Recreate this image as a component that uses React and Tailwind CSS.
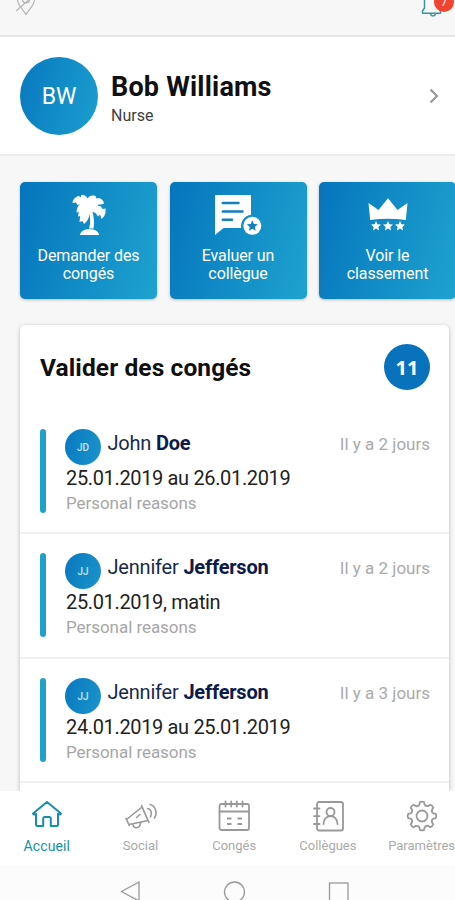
import React from "react";

const STAR = "M0-5 1.5-1.7 5-1.4 2.3 1 3.1 4.5 0 2.6-3.1 4.5-2.3 1-5-1.4-1.5-1.7Z";

function PinIcon() {
  return (
    <svg width="20" height="24" viewBox="0 0 20 24" fill="none" stroke="#b4b4b4" strokeWidth="1.2">
      <path d="M10 22.5C7 17.500 1.500 13 1.500 7.500a8.500 8.500 0 0 1 17 0C18.500 13 13 17.500 10 22.500Z" />
      <circle cx="10" cy="7.500" r="3.500" />
      <path d="M0 19 18 3" />
    </svg>
  );
}

function BellIcon() {
  return (
    <svg width="22" height="24" viewBox="0 0 22 24" fill="none" stroke="#3a92a5" strokeWidth="1.5" strokeLinejoin="round">
      <path d="M3.500 15V8a7 7 0 0 1 14 0v7l2 3v2.200H1.500V18Z" />
      <path d="M9.500 21c.5 2.500 4.500 2.500 5 0" />
    </svg>
  );
}

function PalmIcon() {
  return (
    <svg width="34" height="42" viewBox="0 0 34 42" fill="#fff">
      <path d="M15.500 4.500C14.500 2 12.500.8 9.500.8L8.500 3.500 7 2C3.500 2.500 1 5 .5 9L4 8.500 5.500 11 8.500 10C6 11.500 5 13.500 4.500 18.500L6.800 18 6 22.500 8.200 22 7.500 28 10.500 27 12 30C15.500 27 17.500 23.500 17.500 19.500 18.500 24.500 18.500 30 17 34.500H21.500C22.500 29 22 23.500 20.500 17.500L24 19.500 26 22.500 28 20.500 29.500 25C33 22.500 34 18.500 33.500 14.500L30.500 15 29 12.500 25.500 11.500 26.500 10.500 29 10.500 32 9.500C31.500 5.500 28 3.500 24.500 4.500L23.500 2C20 1 17 2 15.500 4.500Z" />
      <path d="M8 41c.5-4 4-5.800 9.500-5.800s9 1.800 9.500 5.800Z" />
    </svg>
  );
}

function ReviewIcon() {
  return (
    <svg width="48" height="42" viewBox="0 0 48 42">
      <path fill="#fff" d="M1 1H37V20.800a11.500 11.500 0 0 0-9.800 13.200H9.500L1 41Z" />
      <path stroke="#1480c0" strokeWidth="2.500" strokeLinecap="round" d="M8.800 9H24.500M8.800 17.500H28.500M8.800 25.800H18" />
      <circle cx="38.300" cy="31.800" r="9" fill="#fff" />
      <path transform="translate(38.300 31.800) scale(1.100)" d={STAR} fill="#1480c0" />
    </svg>
  );
}

function CrownIcon() {
  return (
    <svg width="40" height="34" viewBox="0 0 40 34" fill="#fff">
      <path d="M.5 5 10.500 12 20 .3 29.500 12 39.500 5 37.800 22Q20 19.500 2.200 22Z" />
      <path transform="translate(8 28)" d={STAR} />
      <path transform="translate(20 28)" d={STAR} />
      <path transform="translate(32 28)" d={STAR} />
    </svg>
  );
}

const line = {
  width: 34,
  height: 34,
  viewBox: "0 0 34 34",
  fill: "none",
  stroke: "currentColor",
  strokeWidth: 1.8,
  strokeLinejoin: "round",
  strokeLinecap: "round",
};

function HomeIcon() {
  return (
    <svg {...line} strokeWidth="2">
      <path d="M17 3 3 14.500Q4 16.500 6 14.800V25.800Q6 27 7.200 27H13.200V19.500Q13.200 18 14.500 18H19.500Q20.800 18 20.800 19.500V27H26.800Q28 27 28 25.800V14.800Q30 16.500 31 14.500Z" />
    </svg>
  );
}

function MegaphoneIcon() {
  return (
    <svg {...line} strokeWidth="1.600">
      <path d="M2.500 20.500 18 8 24 21.500 5 25.500ZM17.500 6.500 25 23.500M2 19.500 5.300 26.500M9 25.500c.5 4.500 7 4.500 7.500-1.500M12.500 18.500 16 15.500M23.500 9.500c3.500.5 5 4.500 3 8.500M26 5.500c5 1 8 8 4.500 13.500" />
    </svg>
  );
}

function CalendarIcon() {
  return (
    <svg {...line}>
      <rect x="2.500" y="5" width="29.500" height="26" rx="2" />
      <path d="M2.500 12.500H32M8.500 2.500V7.500M14.200 2.500V7.500M19.800 2.500V7.500M25.500 2.500V7.500" />
      <path strokeWidth="2.200" strokeLinecap="butt" d="M10 19.500h4.500M20.500 19.500h4.500M10 25h4.500M20.500 25h4.500" />
    </svg>
  );
}

function ContactIcon() {
  return (
    <svg {...line}>
      <rect x="6" y="3" width="26" height="28.500" rx="2" />
      <path d="M3 9.500H8.500M3 17.200H8.500M3 25H8.500" />
      <circle cx="19.500" cy="13" r="4" />
      <path d="M12.500 25C12.500 14.500 26.500 14.500 26.500 25" />
    </svg>
  );
}

// Eight lobes: each tooth is a rounded cap, joined to the next by a curved notch.
const gearPoint = (angle, radius) =>
  `${(17 + radius * Math.sin(angle)).toFixed(2)} ${(17 - radius * Math.cos(angle)).toFixed(2)}`;
const gearPath =
  Array.from({ length: 8 }, (_, i) => {
    const a = (i * Math.PI) / 4;
    return `${i ? "L" : "M"}${gearPoint(a - 0.15, 14)}Q${gearPoint(a, 14.8)} ${gearPoint(a + 0.15, 14)}L${gearPoint(a + 0.22, 11.8)}Q${gearPoint(a + 0.39, 10)} ${gearPoint(a + 0.565, 11.8)}`;
  }).join("") + "Z";

function GearIcon() {
  return (
    <svg {...line}>
      <path d={gearPath} />
      <circle cx="17" cy="17" r="5.500" />
    </svg>
  );
}

const requests = [
  { initials: "JD", first: "John", last: "Doe", ago: "Il y a 2 jours", dates: "25.01.2019 au 26.01.2019" },
  { initials: "JJ", first: "Jennifer", last: "Jefferson", ago: "Il y a 2 jours", dates: "25.01.2019, matin" },
  { initials: "JJ", first: "Jennifer", last: "Jefferson", ago: "Il y a 3 jours", dates: "24.01.2019 au 25.01.2019" },
];

const actions = [
  { Icon: PalmIcon, top: "Demander des", bottom: "congés" },
  { Icon: ReviewIcon, top: "Evaluer un", bottom: "collègue" },
  { Icon: CrownIcon, top: "Voir le", bottom: "classement" },
];

const tabs = [
  { Icon: HomeIcon, label: "Accueil", active: true },
  { Icon: MegaphoneIcon, label: "Social" },
  { Icon: CalendarIcon, label: "Congés" },
  { Icon: ContactIcon, label: "Collègues" },
  { Icon: GearIcon, label: "Paramètres" },
];

export default function App() {
  return (
    <div className="flex h-[900px] w-[455px] flex-col overflow-hidden bg-[#f7f7f7] font-['Roboto',sans-serif] text-[#101010]">
      <header className="flex h-[37px] shrink-0 items-start justify-between border-b-2 border-[#e6e6e6] pl-4">
        <div className="-mt-2"><PinIcon /></div>
        <div className="relative -mt-[7px] mr-[12px]">
          <BellIcon />
          <span className="absolute top-[-1px] left-[13px] flex size-5 items-center justify-center rounded-full bg-[#f0442f] text-[12px] leading-3 text-white">7</span>
        </div>
      </header>

      <section className="flex h-[119px] shrink-0 items-center border-b-2 border-[#ececec] bg-white pr-[15px] pl-5">
        <div className="flex size-[78px] items-center justify-center rounded-full bg-linear-[105deg,#0878bf,#1b9fd0] pt-[3px] text-[23px] text-white">BW</div>
        <div className="ml-[13px] flex-1 pt-[6px]">
          <h1 className="text-[27px] leading-8 font-bold tracking-[0.200px] whitespace-nowrap">Bob Williams</h1>
          <p className="mt-[3px] text-[16px] leading-5 text-[#404040]">Nurse</p>
        </div>
        <svg width="12" height="18" viewBox="0 0 12 18" fill="none" stroke="#999" strokeWidth="2.200"><path d="m2.500 2.500 6.500 6.500-6.500 6.500" /></svg>
      </section>

      <section className="mt-[26px] ml-5 flex shrink-0 gap-[12.5px]">
        {actions.map(({ Icon, top, bottom }) => (
          <div key={top} className="flex h-[117px] w-[137px] shrink-0 flex-col items-center rounded-[5px] bg-linear-[105deg,#0575bd,#1ea3cf] text-[16px] leading-[18px] tracking-[-0.1px] text-white shadow-[0_1px_3px_rgba(0,0,0,0.25)]">
            <div className="flex h-[65px] items-center"><Icon /></div>
            <span className="whitespace-nowrap">{top}</span>
            <span>{bottom}</span>
          </div>
        ))}
      </section>

      <main className="mt-[26px] mr-1.5 ml-5 flex-1 overflow-hidden rounded-t-[5px] bg-white shadow-[0_1px_4px_rgba(0,0,0,0.25)]">
        <div className="flex h-[85px] items-center justify-between pr-[19px] pb-px pl-5">
          <h2 className="pt-[3px] text-[24.5px] font-bold tracking-[0.100px]">Valider des congés</h2>
          <span className="flex size-[46px] items-center justify-center rounded-full bg-[#0872bc] pt-px font-['Open_Sans',sans-serif] text-[20px] font-bold text-white">11</span>
        </div>
        {requests.map((r, i) => (
          <article key={i} className="h-[124.300px] pt-[19px]">
            <div className="flex h-[105.300px] border-b-2 border-[#f0f0f0] pr-[19px] pl-5">
              <div className="h-[84px] w-[6px] shrink-0 rounded-full bg-[#20a2c8]" />
              <div className="ml-5 flex-1">
                <div className="flex h-[35px]">
                  <span className="-ml-px flex size-[36px] items-center justify-center rounded-full bg-linear-[105deg,#0878bf,#1b94cb] pt-px text-[10px] font-medium text-[#c5e6f5]">{r.initials}</span>
                  <p className="ml-[6.500px] flex-1 text-[20px] leading-[28px] tracking-[-0.2px] whitespace-nowrap text-[#17294b]">{r.first} <b className="font-bold text-[#0b1b4b]">{r.last}</b></p>
                  <time className="pt-[3px] text-[17px] leading-6 whitespace-nowrap text-[#aaa]">{r.ago}</time>
                </div>
                <p className="text-[20px] leading-7 tracking-[-0.350px] whitespace-nowrap text-[#222]">{r.dates}</p>
                <p className="text-[17px] leading-[22px] tracking-[-0.050px] text-[#a6a6a6]">Personal reasons</p>
              </div>
            </div>
          </article>
        ))}
      </main>

      <nav className="z-10 flex h-[74px] shrink-0 bg-white">
        {tabs.map(({ Icon, label, active }) => (
          <div key={label} className={`flex w-[93.700px] shrink-0 flex-col items-center pt-2 ${active ? "text-[#158fa9]" : "text-[#999]"}`}>
            <Icon />
            <span className={`mt-[4px] leading-[18px] ${active ? "text-[14px] tracking-[0.100px]" : "text-[13px] text-[#aaa]"}`}>{label}</span>
          </div>
        ))}
      </nav>
      <footer className="h-[35px] shrink-0 bg-[#fcfcfc]">
        <svg width="455" height="35" viewBox="0 865 455 35" fill="none" stroke="#999" strokeWidth="1.300">
          <path d="M139 882V901L121.500 891.500Z" /><circle cx="234.500" cy="892" r="10" /><rect x="329.500" y="883" width="18.500" height="18.500" />
        </svg>
      </footer>
    </div>
  );
}
